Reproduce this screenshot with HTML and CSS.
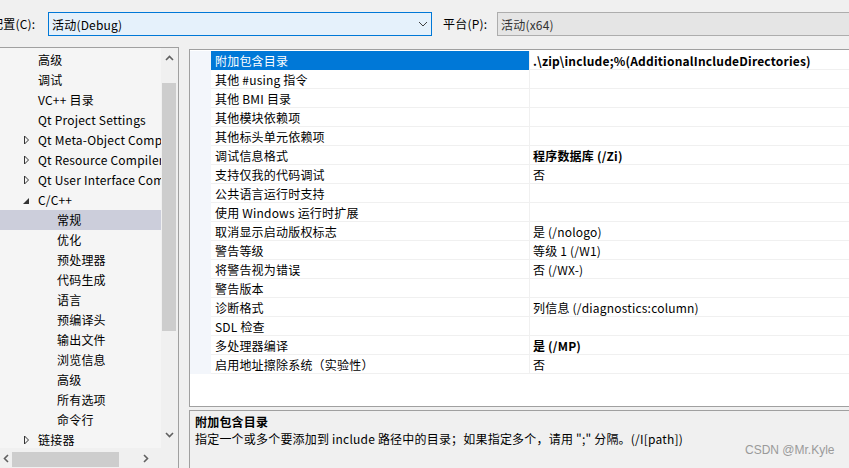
FILE: index.html
```html
<!DOCTYPE html>
<html lang="zh-CN">
<head>
<meta charset="utf-8">
<title>属性页</title>
<link rel="stylesheet" href="styles.css">
</head>
<body>
<div class="top">
  <span class="lbl lbl-cfg">配置(C):</span>
  <div class="combo combo-cfg">
    <span>活动(Debug)</span>
    <svg class="chev" width="10" height="6" viewBox="0 0 10 6"><path d="M1 1 L5 5 L9 1" fill="none" stroke="#404040" stroke-width="1"/></svg>
  </div>
  <span class="lbl lbl-plat">平台(P):</span>
  <div class="combo combo-plat"><span>活动(x64)</span></div>
</div>
<div class="main">
  <div class="tree">
    <div class="tree-list">
      <div class="ti l1">高级</div>
      <div class="ti l1">调试</div>
      <div class="ti l1">VC++ 目录</div>
      <div class="ti l1">Qt Project Settings</div>
      <div class="ti l1"><svg class="exp" width="7" height="10" viewBox="0 0 7 10"><path d="M1.5 1 L5.5 5 L1.5 9 Z" fill="none" stroke="#333" stroke-width="1"/></svg>Qt Meta-Object Compiler</div>
      <div class="ti l1"><svg class="exp" width="7" height="10" viewBox="0 0 7 10"><path d="M1.5 1 L5.5 5 L1.5 9 Z" fill="none" stroke="#333" stroke-width="1"/></svg>Qt Resource Compiler</div>
      <div class="ti l1"><svg class="exp" width="7" height="10" viewBox="0 0 7 10"><path d="M1.5 1 L5.5 5 L1.5 9 Z" fill="none" stroke="#333" stroke-width="1"/></svg>Qt User Interface Compiler</div>
      <div class="ti l1"><svg class="exp" width="7" height="10" viewBox="0 0 7 10"><path d="M0 9 L6 9 L6 3 Z" fill="#333"/></svg>C/C++</div>
      <div class="ti l2 sel">常规</div>
      <div class="ti l2">优化</div>
      <div class="ti l2">预处理器</div>
      <div class="ti l2">代码生成</div>
      <div class="ti l2">语言</div>
      <div class="ti l2">预编译头</div>
      <div class="ti l2">输出文件</div>
      <div class="ti l2">浏览信息</div>
      <div class="ti l2">高级</div>
      <div class="ti l2">所有选项</div>
      <div class="ti l2">命令行</div>
      <div class="ti l1"><svg class="exp" width="7" height="10" viewBox="0 0 7 10"><path d="M1.5 1 L5.5 5 L1.5 9 Z" fill="none" stroke="#333" stroke-width="1"/></svg>链接器</div>
    </div>
    <div class="vscroll">
      <div class="arrow-v"><svg width="9" height="6" viewBox="0 0 9 6"><path d="M1 5 L4.5 1.5 L8 5" fill="none" stroke="#606060" stroke-width="1.6"/></svg></div>
      <div class="vthumb"></div>
      <div class="vtrack"></div>
      <div class="arrow-v"><svg width="9" height="6" viewBox="0 0 9 6"><path d="M1 1 L4.5 4.5 L8 1" fill="none" stroke="#606060" stroke-width="1.6"/></svg></div>
    </div>
    <div class="hscroll">
      <div class="arrow-h"><svg width="6" height="9" viewBox="0 0 6 9"><path d="M5 1 L1.5 4.5 L5 8" fill="none" stroke="#606060" stroke-width="1.6"/></svg></div>
      <div class="hthumb"></div>
      <div class="htrack"></div>
      <div class="arrow-h"><svg width="6" height="9" viewBox="0 0 6 9"><path d="M1 1 L4.5 4.5 L1 8" fill="none" stroke="#606060" stroke-width="1.6"/></svg></div>
    </div>
    <div class="corner"></div>
  </div>
  <div class="right">
    <div class="grid">
      <div class="row sel"><div class="gut"></div><div class="name">附加包含目录</div><div class="val b">.\zip\include;%(AdditionalIncludeDirectories)</div></div>
      <div class="row"><div class="gut"></div><div class="name">其他 #using 指令</div><div class="val"></div></div>
      <div class="row"><div class="gut"></div><div class="name">其他 BMI 目录</div><div class="val"></div></div>
      <div class="row"><div class="gut"></div><div class="name">其他模块依赖项</div><div class="val"></div></div>
      <div class="row"><div class="gut"></div><div class="name">其他标头单元依赖项</div><div class="val"></div></div>
      <div class="row"><div class="gut"></div><div class="name">调试信息格式</div><div class="val b">程序数据库 (/Zi)</div></div>
      <div class="row"><div class="gut"></div><div class="name">支持仅我的代码调试</div><div class="val">否</div></div>
      <div class="row"><div class="gut"></div><div class="name">公共语言运行时支持</div><div class="val"></div></div>
      <div class="row"><div class="gut"></div><div class="name">使用 Windows 运行时扩展</div><div class="val"></div></div>
      <div class="row"><div class="gut"></div><div class="name">取消显示启动版权标志</div><div class="val">是 (/nologo)</div></div>
      <div class="row"><div class="gut"></div><div class="name">警告等级</div><div class="val">等级 1 (/W1)</div></div>
      <div class="row"><div class="gut"></div><div class="name">将警告视为错误</div><div class="val">否 (/WX-)</div></div>
      <div class="row"><div class="gut"></div><div class="name">警告版本</div><div class="val"></div></div>
      <div class="row"><div class="gut"></div><div class="name">诊断格式</div><div class="val">列信息 (/diagnostics:column)</div></div>
      <div class="row"><div class="gut"></div><div class="name">SDL 检查</div><div class="val"></div></div>
      <div class="row"><div class="gut"></div><div class="name">多处理器编译</div><div class="val b">是 (/MP)</div></div>
      <div class="row"><div class="gut"></div><div class="name">启用地址擦除系统（实验性）</div><div class="val">否</div></div>
    </div>
    <div class="desc">
      <div class="desc-title">附加包含目录</div>
      <div class="desc-text">指定一个或多个要添加到 include 路径中的目录；如果指定多个，请用 ";" 分隔。(/I[path])</div>
      <div class="watermark">CSDN @Mr.Kyle</div>
    </div>
  </div>
</div>
</body>
</html>
```
FILE: styles.css
```css
html, body {
  margin: 0;
  padding: 0;
  height: 100%;
  overflow: hidden;
}
body {
  background: #f0f0f0;
  font-family: "Noto Sans CJK SC", "Noto Sans", sans-serif;
  font-size: 12px;
  letter-spacing: 0.2px;
  color: #000;
  width: 849px;
  height: 468px;
}
.top {
  display: flex;
  align-items: center;
  height: 24px;
  padding-top: 12px;
  padding-bottom: 11px;
  white-space: nowrap;
}
.lbl {
  line-height: 24px;
}
.lbl-cfg {
  margin-left: -9px;
  width: 46px;
  margin-right: 11px;
}
.lbl-plat {
  margin-left: 11px;
  width: 43px;
  margin-right: 11px;
}
.combo {
  box-sizing: border-box;
  height: 24px;
  display: flex;
  align-items: center;
  padding-left: 3px;
}
.combo-cfg {
  width: 384px;
  background: #e5f1fb;
  border: 1px solid #0078d7;
  justify-content: space-between;
  padding-right: 3px;
}
.combo-plat {
  flex: 1;
  margin-right: -10px;
  background: #e5e5e5;
  border: 1px solid #adadad;
  color: #333;
}
.main {
  display: flex;
  height: 421px;
}
.tree {
  box-sizing: border-box;
  width: 179px;
  height: 421px;
  border-top: 1px solid #a0a0a0;
  border-right: 1px solid #a0a0a0;
  display: grid;
  grid-template-columns: 161px 17px;
  grid-template-rows: 400px 20px;
  flex: none;
}
.tree-list {
  background: #f5f5f5;
  padding-top: 2px;
  overflow: hidden;
  white-space: nowrap;
}
.ti {
  height: 20px;
  line-height: 20px;
  display: flex;
  align-items: center;
  overflow: hidden;
}
.ti.l1 {
  padding-left: 38px;
}
.ti.l2 {
  padding-left: 57px;
}
.ti.sel {
  background: #cccedb;
}
.exp {
  margin-left: -15px;
  margin-right: 8px;
  flex: none;
}
.vscroll {
  background: #f0f0f0;
  display: flex;
  flex-direction: column;
  padding-right: 1px;
}
.arrow-v {
  height: 20px;
  display: flex;
  align-items: center;
  justify-content: center;
  flex: none;
}
.vthumb {
  height: 248px;
  margin: 15px 1px 0 1px;
  background: #cdcdcd;
  flex: none;
}
.vtrack {
  flex: 1;
}
.vscroll .arrow-v:last-child {
  align-items: flex-start;
  height: 16px;
}
.hscroll {
  background: #f0f0f0;
  display: flex;
  align-items: center;
  height: 20px;
}
.arrow-h {
  width: 12px;
  display: flex;
  justify-content: center;
  flex: none;
}
.hthumb {
  width: 107px;
  height: 15px;
  background: #cdcdcd;
  margin-top: 2px;
}
.htrack {
  flex: 1;
}
.hscroll .arrow-h:last-child {
  width: 18px;
  justify-content: flex-start;
  padding-left: 4px;
}
.corner {
  background: #f0f0f0;
}
.right {
  flex: 1;
  margin-left: 10px;
  margin-right: -10px;
  display: flex;
  flex-direction: column;
  margin-top: 2px;
}
.grid {
  box-sizing: border-box;
  height: 358px;
  background: #fff;
  border: 1px solid #a0a0a0;
  border-right: none;
  padding-top: 1px;
  flex: none;
}
.row {
  display: grid;
  grid-template-columns: 21px 318px 1fr;
  height: 19px;
}
.gut {
  background: #f3f6fb;
}
.name, .val {
  border-bottom: 1px solid #f0f0f0;
  line-height: 19px;
  white-space: nowrap;
  overflow: hidden;
}
.name {
  padding-left: 4px;
}
.val {
  border-left: 1px solid #f0f0f0;
  padding-left: 3px;
}
.val.b {
  font-weight: bold;
}
.row.sel .name {
  background: #0078d7;
  color: #fff;
  border-bottom-color: #0078d7;
}
.desc {
  flex: 1;
  margin-top: 3px;
  border-top: 1px solid #a0a0a0;
  border-left: 1px solid #a0a0a0;
  padding: 2px 0 0 5px;
  position: relative;
  white-space: nowrap;
}
.desc-title {
  font-weight: bold;
  line-height: 17px;
}
.desc-text {
  line-height: 17px;
}
.watermark {
  position: absolute;
  left: 555px;
  top: 32px;
  color: #9a9a9a;
  font-family: "Liberation Sans", Arial, sans-serif;
  font-size: 12px;
  letter-spacing: 0;
}
```
